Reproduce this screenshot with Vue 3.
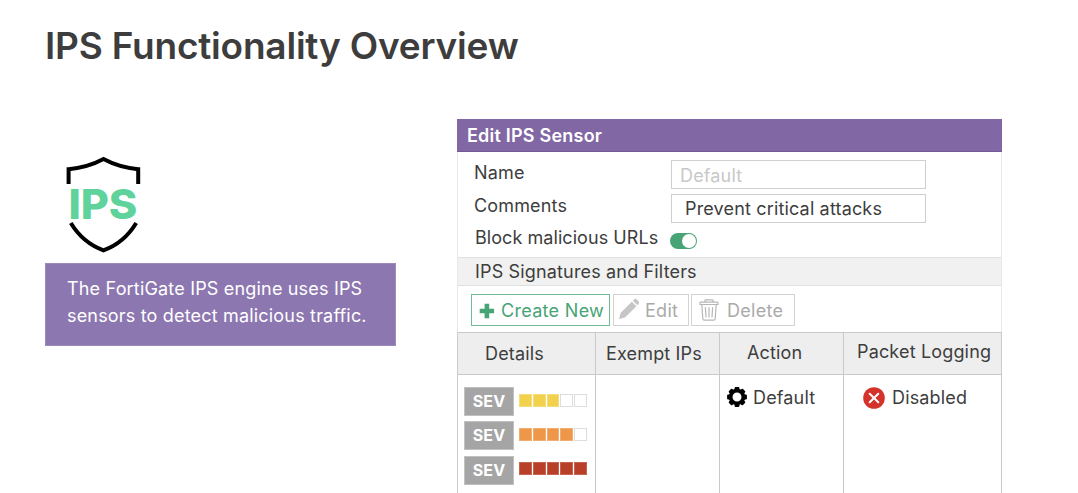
<script setup>
const severities = [
  { level: 3, tone: 'yellow' },
  { level: 4, tone: 'orange' },
  { level: 5, tone: 'red' },
]
</script>

<template>
  <main class="page">
    <h1 class="title">IPS Functionality Overview</h1>
    <div class="content">
      <section class="intro">
        <svg class="shield" width="76" height="98" viewBox="0 0 76 98">
          <path d="M3.6 28V13.2Q23 11.5 38.5 3.1Q54 11.5 73.2 13.2V28" fill="none" stroke="#000" stroke-width="4" />
          <path d="M5.8 67Q18 87 38.5 94.3Q59 87 71.2 67" fill="none" stroke="#000" stroke-width="4" />
          <text class="shield-text" x="3.4" y="63" textLength="69" lengthAdjust="spacingAndGlyphs">IPS</text>
        </svg>
        <p class="callout">
          <span class="line one">The FortiGate IPS engine uses IPS</span>
          <span class="line two">sensors to detect malicious traffic.</span>
        </p>
      </section>

      <section class="panel">
        <header class="panel-head"><span>Edit IPS Sensor</span></header>
        <div class="form">
          <div class="row name">
            <label>Name</label>
            <div class="field muted">Default</div>
          </div>
          <div class="row comments">
            <label>Comments</label>
            <div class="field filled">Prevent critical attacks</div>
          </div>
          <div class="row block">
            <label>Block malicious URLs</label>
            <span class="toggle"><i></i></span>
          </div>
        </div>
        <div class="band"><span>IPS Signatures and Filters</span></div>
        <div class="toolbar">
          <div class="btn create">
            <svg width="16" height="16" viewBox="0 0 16 16"><path d="M5.6.8h4.6v4.9h4.9v4.6h-4.9v4.9H5.6v-4.9H.7V5.7h4.9z" fill="#48a375" /></svg>
            <span>Create New</span>
          </div>
          <div class="btn edit">
            <svg width="22" height="22" viewBox="0 0 22 22" fill="#c6c6c6"><path d="M1 21l1.5-6L13.8 3.7l4.6 4.6L7 19.5z" /><path d="M14.8 2.7l1.4-1.4q1.2-1 2.4 0l2.1 2.1q1 1.2 0 2.4l-1.4 1.4z" /></svg>
            <span>Edit</span>
          </div>
          <div class="btn delete">
            <svg width="20" height="22" viewBox="0 0 20 22" fill="none" stroke="#b7b7b7" stroke-width="1.2"><path d="M1 5.5V4q0-.8.9-.8h16.2q.9 0 .9.8v1.5zM6 3V1.6Q6 .8 7 .8h6q1 0 1 .8V3M2.8 5.8l1 14q.1 1.3 1.4 1.3h9.6q1.3 0 1.4-1.3l1-14M6.4 8.2l.6 10.2M10 8.2v10.2M13.6 8.2L13 18.4" /></svg>
            <span>Delete</span>
          </div>
        </div>
        <div class="table">
          <div class="th c1"><span>Details</span></div>
          <div class="th c2"><span>Exempt IPs</span></div>
          <div class="th c3"><span>Action</span></div>
          <div class="th c4"><span>Packet Logging</span></div>
          <div class="td sevs">
            <div v-for="s in severities" :key="s.tone" class="sev">
              <span class="tag">SEV</span>
              <span class="meter">
                <i v-for="n in 5" :key="n" :class="n <= s.level ? s.tone : 'empty'"></i>
              </span>
            </div>
          </div>
          <div class="td"></div>
          <div class="td action">
            <svg width="20" height="20" viewBox="-10 -10 20 20">
              <circle r="6.4" fill="none" stroke="#000" stroke-width="3.8" />
              <rect v-for="n in 8" :key="n" x="-2.4" y="-9.9" width="4.8" height="3.5" rx="1" :transform="`rotate(${n * 45})`" />
            </svg>
            <span>Default</span>
          </div>
          <div class="td logging">
            <svg width="22" height="22" viewBox="0 0 22 22"><circle cx="11" cy="11" r="10.8" fill="#d5322b" /><path d="M6.7 6.7l8.6 8.6M15.3 6.7l-8.6 8.6" stroke="#fff" stroke-width="2" stroke-linecap="round" /></svg>
            <span>Disabled</span>
          </div>
        </div>
      </section>
    </div>
  </main>
</template>

<style>
body { background: #fff; }
</style>

<style scoped>
.page {
  box-sizing: border-box;
  width: 1078px;
  height: 493px;
  overflow: hidden;
  padding: 24px 0 0 45px;
  font: 18px/24px Inter, sans-serif;
  letter-spacing: 0.16px;
  color: #3d3d3d;
  white-space: nowrap;
}
.page * { box-sizing: border-box; }
.title { margin: 0; height: 95px; font-size: 37px; line-height: 44px; font-weight: 600; letter-spacing: -0.2px; }
.content { display: flex; align-items: flex-start; }
.intro { width: 412px; padding-top: 37px; }
.shield { display: block; margin-left: 20px; }
.shield-text { font: 800 41px Inter, sans-serif; fill: #5fd39b; letter-spacing: 0; }
.callout { width: 351px; height: 83px; margin: 9px 0 0; padding: 11px 0 0 21px; background: #8d77b0; border: 1px solid #9d8abb; color: #fff; line-height: 27px; letter-spacing: 0.18px; }
.line { display: block; }
.panel { width: 545px; height: 374px; border: solid #e8e8e8; border-width: 0 1px; flex: none; }
.panel-head { height: 33px; margin: 0 0 0 -1px; width: 545px; padding: 5px 0 0 10px; background: #8167a3; border-bottom: 1px solid #74599a; color: #fff; font-weight: 600; letter-spacing: 0.22px; }
.form { height: 105px; padding: 8px 0 0 16px; }
.row { display: flex; height: 34px; }
.row label { width: 197px; }
.name label { padding-top: 1px; }
.row.block { height: 30px; padding: 0 0 0 1px; }
.row.block label { width: 195px; margin-top: -2px; letter-spacing: 0.06px; }
.field { width: 255px; height: 29px; border: 1px solid #cfcfcf; padding: 3px 0 0 8px; }
.name .field { height: 29px; }
.muted { color: #c8c8c8; }
.filled { padding: 2px 0 0 13px; }
.toggle { width: 27px; height: 16px; margin-top: 5px; border-radius: 8px; background: #48a375; padding: 1px; }
.toggle i { display: block; width: 14px; height: 14px; margin-left: 11px; border-radius: 50%; background: #fff; }
.band { height: 29px; background: #f1f1f1; border: solid #e0e0e0; border-width: 1px 0; padding: 2px 0 0 17px; }
.toolbar { height: 46px; display: flex; padding: 8px 0 0 13px; gap: 3px; }
.btn { height: 32px; border: 1px solid #d3d3d3; color: #aaa; display: flex; padding-top: 3px; letter-spacing: 0.3px; }
.btn svg { flex: none; }
.btn span { padding-top: 1px; }
.create { width: 139px; color: #48a375; border-color: #71bb94; padding-left: 7px; }
.create svg { margin: 5px 6px 0 0; }
.edit { width: 76px; padding-left: 4px; }
.edit svg { margin: 0 5px 0 0; }
.delete { width: 104px; margin-left: -1px; padding-left: 7px; }
.delete svg { margin: 1px 8px 0 0; }
.table { display: grid; grid-template-columns: 138px 124px 124px 158px; grid-template-rows: 43px 118px; margin: 0 -1px; border-left: 1px solid #cbcbcb; }
.th { background: #eee; border: solid #c9c9c9; border-width: 1px 1px 1px 0; padding-top: 9px; }
.td { border-right: 1px solid #c9c9c9; }
.c1 { padding-left: 27px; }
.c2 { padding-left: 10px; }
.c3 { padding: 8px 0 0 27px; }
.c4 { padding: 7px 0 0 13px; }
.sevs { padding: 12px 0 0 6px; }
.sev { display: flex; height: 34.4px; }
.tag { width: 50px; height: 29px; background: #a5a5a5; border: 1px solid #c1c1c1; color: #fff; font-size: 16px; line-height: 27px; font-weight: 700; text-align: center; }
.meter { display: flex; gap: 1px; margin: 6.5px 0 0 5px; }
.meter i { width: 12.8px; height: 13px; border: 1px solid #ddd; }
.meter .yellow { background: #f2d24d; border-color: #f4dc78; }
.meter .orange { background: #ee9748; border-color: #f2ae70; }
.meter .red { background: #b94028; border-color: #c56450; }
.action, .logging { display: flex; padding: 11px 0 0 7px; }
.action svg { margin: 1px 6px 0 0; }
.logging { padding-left: 19px; }
.logging svg { margin: 1px 7px 0 0; }
</style>
